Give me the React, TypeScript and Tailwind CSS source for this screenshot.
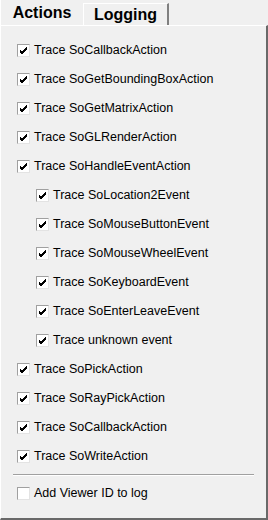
import React from "react"

type Item = { label: string; checked: boolean; indent?: boolean }

const ITEMS: Item[] = [
  { label: "Trace SoCallbackAction", checked: true },
  { label: "Trace SoGetBoundingBoxAction", checked: true },
  { label: "Trace SoGetMatrixAction", checked: true },
  { label: "Trace SoGLRenderAction", checked: true },
  { label: "Trace SoHandleEventAction", checked: true },
  { label: "Trace SoLocation2Event", checked: true, indent: true },
  { label: "Trace SoMouseButtonEvent", checked: true, indent: true },
  { label: "Trace SoMouseWheelEvent", checked: true, indent: true },
  { label: "Trace SoKeyboardEvent", checked: true, indent: true },
  { label: "Trace SoEnterLeaveEvent", checked: true, indent: true },
  { label: "Trace unknown event", checked: true, indent: true },
  { label: "Trace SoPickAction", checked: true },
  { label: "Trace SoRayPickAction", checked: true },
  { label: "Trace SoCallbackAction", checked: true },
  { label: "Trace SoWriteAction", checked: true },
]

function CheckBox({ checked }: { checked: boolean }) {
  return (
    <span className="flex h-[13px] w-[13px] shrink-0 items-center justify-center border border-t-[#a0a0a0] border-l-[#a0a0a0] border-r-[#e3e3e3] border-b-[#e3e3e3] bg-white">
      {checked && (
        <svg width="9" height="9" viewBox="0 0 9 9">
          <path d="M1 4 L3 6 L8 1 M1 5 L3 7 L8 2 M1 6 L3 8 L8 3" stroke="#000" strokeWidth="1" fill="none" />
        </svg>
      )}
    </span>
  )
}

function Row({ item }: { item: Item }) {
  return (
    <div className={`flex h-[29px] items-center gap-[4px] ${item.indent ? "pl-[35px]" : "pl-[16px]"}`}>
      <CheckBox checked={item.checked} />
      <span className="text-[12.5px] text-black">{item.label}</span>
    </div>
  )
}

export default function App() {
  return (
    <div
      className="flex h-[520px] w-[268px] flex-col bg-[#f0f0f0]"
      style={{ fontFamily: "'Liberation Sans', Arial, sans-serif" }}
    >
      <div className="flex h-[25px] items-end">
        <div className="relative z-10 -mb-px flex h-[26px] w-[83px] items-center justify-center border-l border-l-white text-[16px] font-bold text-black">
          Actions
        </div>
        <div className="flex h-[22px] w-[86px] items-center justify-center border-t border-l border-r-2 border-t-white border-l-white border-r-[#808080] text-[16px] font-bold text-black">
          Logging
        </div>
      </div>
      <div className="flex flex-1 flex-col border-t border-r-2 border-b-2 border-l border-t-white border-l-white border-r-[#696969] border-b-[#696969] pt-[10px]">
        {ITEMS.map((item, i) => (
          <Row key={i} item={item} />
        ))}
        <div className="mx-[12px] mt-[3px] border-t border-t-[#a0a0a0] border-b border-b-white" />
        <div className="mt-[3px]">
          <Row item={{ label: "Add Viewer ID to log", checked: false }} />
        </div>
      </div>
    </div>
  )
}
